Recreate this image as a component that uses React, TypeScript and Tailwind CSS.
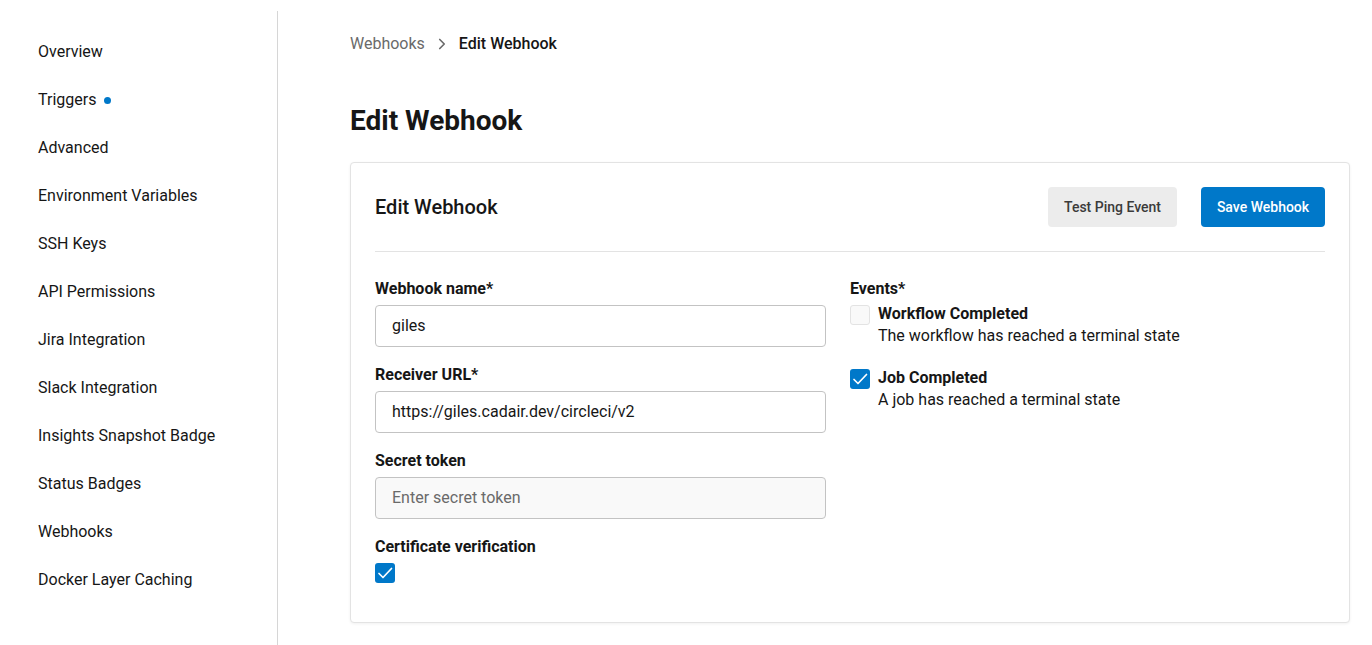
import { ChevronRight } from 'lucide-react'

const navItems = [
  'Overview',
  'Triggers',
  'Advanced',
  'Environment Variables',
  'SSH Keys',
  'API Permissions',
  'Jira Integration',
  'Slack Integration',
  'Insights Snapshot Badge',
  'Status Badges',
  'Webhooks',
  'Docker Layer Caching',
]

function Check({ checked }: { checked: boolean }) {
  return checked ? (
    <span className="w-5 h-5 shrink-0 rounded-[3px] bg-[#0078c9] grid place-items-center">
      <svg width="18" height="18" viewBox="0 0 18 18" fill="none">
        <path d="M3 9.5 L7 13.5 L15.5 4.5" stroke="white" strokeWidth="1.7" strokeLinecap="round" strokeLinejoin="round" />
      </svg>
    </span>
  ) : (
    <span className="block w-5 h-5 shrink-0 rounded-[3px] bg-[#f9f9f9] border border-[#e3e3e3]" />
  )
}

function Field({ label, value, placeholder }: { label: string; value?: string; placeholder?: string }) {
  return (
    <div className="flex flex-col">
      <label className="font-bold text-base leading-6 text-[#161616]">{label}</label>
      <div
        className={`mt-[4px] h-[42px] rounded-[4px] border border-[#c3c3c3] px-4 flex items-center text-base ${
          value ? 'bg-white text-[#161616]' : 'bg-[#f9f9f9] text-[#6a6a6a]'
        }`}
      >
        {value ?? placeholder}
      </div>
    </div>
  )
}

function Event({ checked, title, desc }: { checked: boolean; title: string; desc: string }) {
  return (
    <div className="flex gap-2 items-start">
      <Check checked={checked} />
      <div className="flex flex-col -mt-[2px]">
        <span className="font-bold text-base leading-[22px] text-[#161616]">{title}</span>
        <span className="text-base leading-[22px] text-[#161616]">{desc}</span>
      </div>
    </div>
  )
}

export default function App() {
  return (
    <div className="flex min-h-[645px] bg-white text-[#161616]" style={{ fontFamily: 'Roboto, "Liberation Sans", sans-serif' }}>
      <aside className="w-[278px] shrink-0 mt-[11px] border-r border-[#d6d6d6] pt-[17px]">
        {navItems.map(item => (
          <div key={item} className="h-12 flex items-center pl-[38px] text-base text-[#161616]">
            {item}
            {item === 'Triggers' && <span className="ml-[8px] w-[7px] h-[7px] rounded-full bg-[#0078c9]" />}
          </div>
        ))}
      </aside>

      <main className="flex-1 pl-[72px] pr-[22px]">
        <nav className="mt-[32px] flex items-center text-base leading-6">
          <span className="text-[#6a6a6a]">Webhooks</span>
          <ChevronRight className="mx-[8px] text-[#6a6a6a]" size={18} strokeWidth={2.2} />
          <span className="font-medium text-[#161616]">Edit Webhook</span>
        </nav>

        <h1 className="mt-[48px] text-[28px] leading-[34px] font-bold text-[#161616]">Edit Webhook</h1>

        <section className="mt-[24px] rounded-[4px] border border-[#e3e3e3] bg-white shadow-[0_1px_3px_rgba(0,0,0,0.06)] px-[24px] pb-[39px]">
          <header className="flex items-center justify-between h-[89px] border-b border-[#e3e3e3]">
            <h2 className="text-xl font-medium text-[#161616]">Edit Webhook</h2>
            <div className="flex gap-6">
              <button className="h-10 w-[129px] rounded-[4px] bg-[#ececec] text-sm font-medium text-[#3b3b3b]">
                Test Ping Event
              </button>
              <button className="h-10 w-[124px] rounded-[4px] bg-[#0078c9] text-sm font-medium text-white">
                Save Webhook
              </button>
            </div>
          </header>

          <div className="grid grid-cols-[451px_1fr] gap-x-[24px] pt-[25px]">
            <div className="flex flex-col gap-[16px]">
              <Field label="Webhook name*" value="giles" />
              <Field label="Receiver URL*" value="https://giles.cadair.dev/circleci/v2" />
              <Field label="Secret token" placeholder="Enter secret token" />
              <div className="flex flex-col">
                <label className="font-bold text-base leading-6">Certificate verification</label>
                <div className="mt-[4px]">
                  <Check checked />
                </div>
              </div>
            </div>

            <div className="flex flex-col">
              <span className="font-bold text-base leading-6">Events*</span>
              <div className="mt-[4px] flex flex-col gap-[22px]">
                <Event checked={false} title="Workflow Completed" desc="The workflow has reached a terminal state" />
                <Event checked title="Job Completed" desc="A job has reached a terminal state" />
              </div>
            </div>
          </div>
        </section>
      </main>
    </div>
  )
}
